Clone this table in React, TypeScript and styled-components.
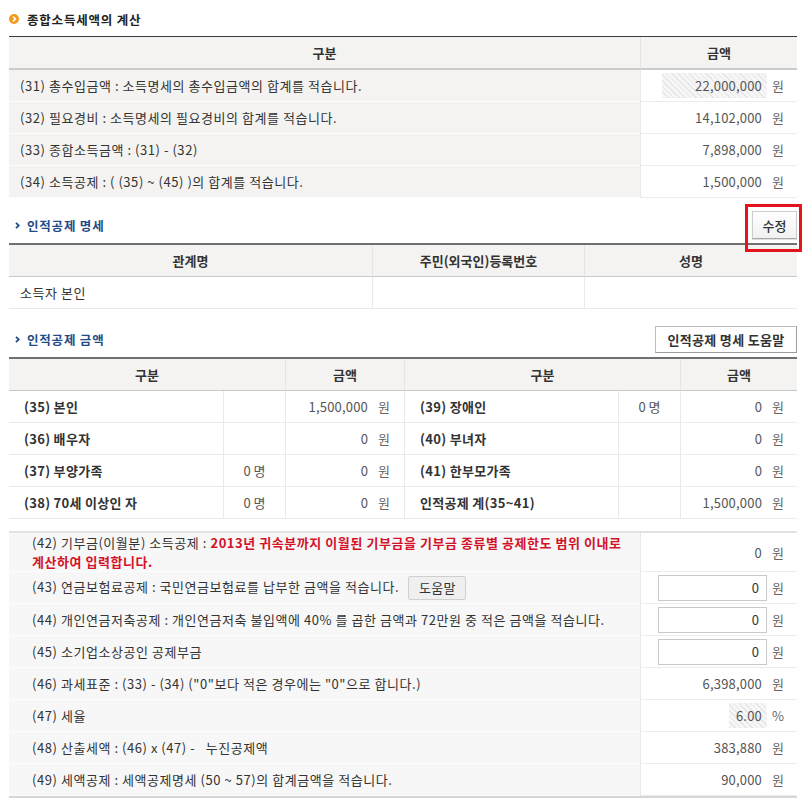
import React from "react";
import styled, { createGlobalStyle } from "styled-components";

const GlobalStyle = createGlobalStyle`
  html, body { margin: 0; padding: 0; background: #fff; }
  body {
    font-family: "Noto Sans CJK KR", "Noto Sans", sans-serif;
    font-size: 13px;
    color: #333;
  }
  * { box-sizing: border-box; }
`;

const Page = styled.div`
  width: 807px;
  padding: 0 10px 0 9px;
`;

const TitleBar = styled.h2`
  margin: 0;
  height: 36px;
  padding-top: 2px;
  display: flex;
  align-items: center;
  gap: 8px;
  font-size: 12.5px;
  font-weight: 700;
  letter-spacing: 0.8px;
  color: #222;
`;

const SectionBar = styled.div<{ $h: number; $pb: number }>`
  height: ${(p) => p.$h}px;
  padding-bottom: ${(p) => p.$pb}px;
  display: flex;
  align-items: flex-end;
  justify-content: space-between;
`;

const SectionTitle = styled.h3`
  margin: 0;
  height: 28px;
  display: flex;
  align-items: center;
  gap: 7px;
  padding-left: 6px;
  font-size: 12.5px;
  font-weight: 700;
  letter-spacing: 0.8px;
  color: #1f4b87;
`;

const Annotated = styled.div`
  position: relative;
  display: flex;
`;

const RedMark = styled.div`
  position: absolute;
  left: -7px;
  top: -7px;
  right: -5px;
  bottom: -13px;
  border: 3px solid #e3141c;
  pointer-events: none;
`;

const EditButton = styled.button`
  height: 28px;
  width: 45px;
  padding: 0;
  font-family: inherit;
  font-size: 13px;
  font-weight: 500;
  color: #333;
  background: linear-gradient(#ffffff, #f1f1f1);
  border: 1px solid #cdcdcd;
  border-bottom-color: #a9a9a9;
  box-shadow: 0 1px 1px rgba(0, 0, 0, 0.12);
`;

const HelpLinkButton = styled.button`
  height: 27px;
  width: 142px;
  padding: 0;
  font-family: inherit;
  font-size: 13px;
  font-weight: 700;
  letter-spacing: 0.3px;
  color: #333;
  background: #fff;
  border: 1px solid #bdbdbd;
  border-right-color: #9d9d9d;
  border-bottom-color: #9d9d9d;
`;

const SmallHelpButton = styled.button`
  height: 24px;
  width: 58px;
  margin-left: 9px;
  padding: 0;
  font-family: inherit;
  font-size: 13px;
  letter-spacing: 0.3px;
  color: #333;
  background: #efefef;
  border: 1px solid #cfcfcf;
  border-radius: 2px;
  vertical-align: middle;
`;

const Table = styled.table<{ $top: string; $bottom?: string; $mt?: number }>`
  width: 100%;
  table-layout: fixed;
  border-collapse: separate;
  border-spacing: 0;
  border-top: ${(p) => p.$top};
  border-bottom: ${(p) => p.$bottom ?? "none"};
  margin-top: ${(p) => p.$mt ?? 0}px;
`;

const Th = styled.th<{ $line: string }>`
  height: ${(p) => (p.$line.startsWith("2px") ? 33 : 32)}px;
  padding: 0;
  background: #f4f3f1;
  font-size: 13px;
  font-weight: 700;
  color: #333;
  text-align: center;
  border-bottom: ${(p) => p.$line};
  border-left: 1px solid #e6e5e3;
  &:first-child { border-left: none; }
`;

const LabelCell = styled.td<{ $bg: string; $pl: number; $bold?: boolean; $tall?: boolean }>`
  height: ${(p) => (p.$tall ? 39 : 32)}px;
  padding: 0 4px 0 ${(p) => p.$pl}px;
  line-height: 17px;
  background: ${(p) => p.$bg};
  font-weight: ${(p) => (p.$bold ? 700 : 400)};
  letter-spacing: ${(p) => (p.$bold ? "0.3px" : "0.55px")};
  color: #333;
  border-bottom: 1px solid ${(p) => (p.$bg === "#fff" ? "#e9e9e9" : "#fdfdfd")};
  border-left: 1px solid #e9e9e9;
  &:first-child { border-left: none; }
  vertical-align: middle;
  white-space: pre-wrap;
`;

const TextLine = styled.div`
  display: block;
  height: 19px;
  line-height: 19px;
  white-space: nowrap;
`;

const ValueCell = styled.td<{ $pr: number; $align?: string; $tall?: boolean }>`
  height: ${(p) => (p.$tall ? 39 : 32)}px;
  padding: 0 ${(p) => p.$pr}px 0 0;
  background: #fff;
  text-align: ${(p) => p.$align ?? "right"};
  color: #555;
  border-bottom: 1px solid #ececec;
  border-left: 1px solid #e9e9e9;
  vertical-align: middle;
  white-space: nowrap;
`;

const Amount = styled.span<{ $hatched?: boolean; $w?: number }>`
  display: inline-block;
  vertical-align: middle;
  height: 25px;
  line-height: 25px;
  padding-right: 5px;
  text-align: right;
  letter-spacing: 0.2px;
  width: ${(p) => (p.$w ? `${p.$w}px` : "auto")};
  background: ${(p) =>
    p.$hatched
      ? "repeating-linear-gradient(45deg, #e6e6e6 0px, #e6e6e6 1px, #f6f6f6 1px, #f6f6f6 4px)"
      : "transparent"};
  color: #555;
`;

const Unit = styled.span`
  display: inline-block;
  vertical-align: middle;
  margin-left: 5px;
  color: #666;
`;

const NumInput = styled.input`
  width: 109px;
  height: 26px;
  padding: 0 7px;
  border: 1px solid #c9c9c9;
  font-family: inherit;
  font-size: 13px;
  color: #333;
  text-align: right;
  vertical-align: middle;
  background: #fff;
`;

const Warn = styled.strong`
  color: #d3122a;
  font-weight: 700;
`;

const OrangeBullet = () => (
  <svg width="10" height="10" viewBox="0 0 10 10">
    <circle cx="5" cy="5" r="5" fill="#f29a1d" />
    <polyline points="4,2.6 6.4,5 4,7.4" fill="none" stroke="#fff" strokeWidth="1.6" />
  </svg>
);

const Chevron = () => (
  <svg width="5" height="7" viewBox="0 0 5 7">
    <polyline points="1,0.8 3.8,3.5 1,6.2" fill="none" stroke="#1f4b87" strokeWidth="1.8" />
  </svg>
);

type Row = { label: React.ReactNode; value: string; unit: string; hatched?: number };

const summaryRows: Row[] = [
  { label: "(31) 총수입금액 : 소득명세의 총수입금액의 합계를 적습니다.", value: "22,000,000", unit: "원", hatched: 105 },
  { label: "(32) 필요경비 : 소득명세의 필요경비의 합계를 적습니다.", value: "14,102,000", unit: "원" },
  { label: "(33) 종합소득금액 : (31) - (32)", value: "7,898,000", unit: "원" },
  { label: "(34) 소득공제 : ( (35) ~ (45) )의 합계를 적습니다.", value: "1,500,000", unit: "원" },
];

type PRow = { label: string; count?: string; value: string };
const personalLeft: PRow[] = [
  { label: "(35) 본인", value: "1,500,000" },
  { label: "(36) 배우자", value: "0" },
  { label: "(37) 부양가족", count: "0 명", value: "0" },
  { label: "(38) 70세 이상인 자", count: "0 명", value: "0" },
];
const personalRight: PRow[] = [
  { label: "(39) 장애인", count: "0 명", value: "0" },
  { label: "(40) 부녀자", value: "0" },
  { label: "(41) 한부모가족", value: "0" },
  { label: "인적공제 계(35~41)", value: "1,500,000" },
];

const lowerRows: Row[] = [
  { label: "(46) 과세표준 : (33) - (34) (\"0\"보다 적은 경우에는 \"0\"으로 합니다.)", value: "6,398,000", unit: "원" },
  { label: "(47) 세율", value: "6.00", unit: "%", hatched: 38 },
  { label: "(48) 산출세액 : (46) x (47) -   누진공제액", value: "383,880", unit: "원" },
  { label: "(49) 세액공제 : 세액공제명세 (50 ~ 57)의 합계금액을 적습니다.", value: "90,000", unit: "원" },
];

const inputRows: { label: React.ReactNode }[] = [
  {
    label: (
      <>
        (43) 연금보험료공제 : 국민연금보험료를 납부한 금액을 적습니다.
        <SmallHelpButton>도움말</SmallHelpButton>
      </>
    ),
  },
  { label: "(44) 개인연금저축공제 : 개인연금저축 불입액에 40% 를 곱한 금액과 72만원 중 적은 금액을 적습니다." },
  { label: "(45) 소기업소상공인 공제부금" },
];

export default function App() {
  return (
    <Page>
      <GlobalStyle />
      <TitleBar>
        <OrangeBullet />
        종합소득세액의 계산
      </TitleBar>

      <Table $top="1px solid #3c3c3c">
        <colgroup>
          <col style={{ width: 631 }} />
          <col style={{ width: 157 }} />
        </colgroup>
        <thead>
          <tr>
            <Th $line="2px solid #cbcbcb">구분</Th>
            <Th $line="2px solid #cbcbcb">금액</Th>
          </tr>
        </thead>
        <tbody>
          {summaryRows.map((r, i) => (
            <tr key={i}>
              <LabelCell $bg="#f4f3f1" $pl={11}>{r.label}</LabelCell>
              <ValueCell $pr={13}>
                <Amount $hatched={!!r.hatched} $w={r.hatched}>{r.value}</Amount>
                <Unit>{r.unit}</Unit>
              </ValueCell>
            </tr>
          ))}
        </tbody>
      </Table>

      <SectionBar $h={45} $pb={4}>
        <SectionTitle>
          <Chevron />
          인적공제 명세
        </SectionTitle>
        <Annotated>
          <EditButton>수정</EditButton>
          <RedMark />
        </Annotated>
      </SectionBar>

      <Table $top="2px solid #707070">
        <colgroup>
          <col style={{ width: 363 }} />
          <col style={{ width: 212 }} />
          <col style={{ width: 213 }} />
        </colgroup>
        <thead>
          <tr>
            <Th $line="1px solid #c8c8c8">관계명</Th>
            <Th $line="1px solid #c8c8c8">주민(외국인)등록번호</Th>
            <Th $line="1px solid #c8c8c8">성명</Th>
          </tr>
        </thead>
        <tbody>
          <tr>
            <LabelCell $bg="#fff" $pl={11}>소득자 본인</LabelCell>
            <LabelCell $bg="#fff" $pl={11}></LabelCell>
            <LabelCell $bg="#fff" $pl={11}></LabelCell>
          </tr>
        </tbody>
      </Table>

      <SectionBar $h={48} $pb={4}>
        <SectionTitle>
          <Chevron />
          인적공제 금액
        </SectionTitle>
        <HelpLinkButton>인적공제 명세 도움말</HelpLinkButton>
      </SectionBar>

      <Table $top="2px solid #707070">
        <colgroup>
          <col style={{ width: 214 }} />
          <col style={{ width: 62 }} />
          <col style={{ width: 119 }} />
          <col style={{ width: 214 }} />
          <col style={{ width: 62 }} />
          <col style={{ width: 117 }} />
        </colgroup>
        <thead>
          <tr>
            <Th $line="1px solid #c8c8c8" colSpan={2}>구분</Th>
            <Th $line="1px solid #c8c8c8">금액</Th>
            <Th $line="1px solid #c8c8c8" colSpan={2}>구분</Th>
            <Th $line="1px solid #c8c8c8">금액</Th>
          </tr>
        </thead>
        <tbody>
          {personalLeft.map((l, i) => {
            const r = personalRight[i];
            return (
              <tr key={i}>
                <LabelCell $bg="#fff" $pl={15} $bold>{l.label}</LabelCell>
                <ValueCell $pr={0} $align="center">{l.count ?? ""}</ValueCell>
                <ValueCell $pr={14}>
                  <Amount>{l.value}</Amount>
                  <Unit>원</Unit>
                </ValueCell>
                <LabelCell $bg="#fff" $pl={15} $bold>{r.label}</LabelCell>
                <ValueCell $pr={0} $align="center">{r.count ?? ""}</ValueCell>
                <ValueCell $pr={13}>
                  <Amount>{r.value}</Amount>
                  <Unit>원</Unit>
                </ValueCell>
              </tr>
            );
          })}
        </tbody>
      </Table>

      <Table $top="2px solid #e2e2e2" $bottom="2px solid #d6d6d6" $mt={12}>
        <colgroup>
          <col style={{ width: 631 }} />
          <col style={{ width: 157 }} />
        </colgroup>
        <tbody>
          <tr>
            <LabelCell $bg="#f7f7f7" $pl={23} $tall>
              <TextLine>
                <span>(42) 기부금(이월분) 소득공제 : </span>
                <Warn>2013년 귀속분까지 이월된 기부금을 기부금 종류별 공제한도 범위 이내로</Warn>
              </TextLine>
              <TextLine>
                <Warn>계산하여 입력합니다.</Warn>
              </TextLine>
            </LabelCell>
            <ValueCell $pr={13} $tall>
              <Amount>0</Amount>
              <Unit>원</Unit>
            </ValueCell>
          </tr>
          {inputRows.map((r, i) => (
            <tr key={i}>
              <LabelCell $bg="#f7f7f7" $pl={23}>{r.label}</LabelCell>
              <ValueCell $pr={13}>
                <NumInput defaultValue="0" />
                <Unit>원</Unit>
              </ValueCell>
            </tr>
          ))}
          {lowerRows.map((r, i) => (
            <tr key={i}>
              <LabelCell $bg="#f7f7f7" $pl={23}>{r.label}</LabelCell>
              <ValueCell $pr={13}>
                <Amount $hatched={!!r.hatched} $w={r.hatched}>{r.value}</Amount>
                <Unit>{r.unit}</Unit>
              </ValueCell>
            </tr>
          ))}
        </tbody>
      </Table>
    </Page>
  );
}
